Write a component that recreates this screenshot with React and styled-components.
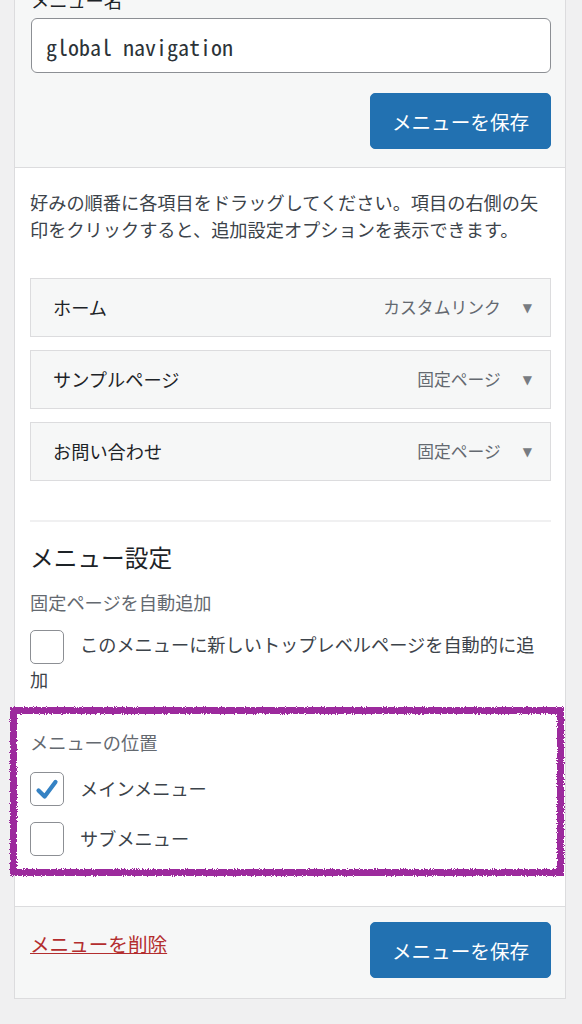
import React from 'react';
import styled, { createGlobalStyle } from 'styled-components';

const GlobalStyle = createGlobalStyle`
  html, body {
    margin: 0;
    padding: 0;
    background: #f0f0f1;
  }
  body {
    font-family: "Noto Sans CJK JP", "Noto Sans", sans-serif;
    font-size: 18.2px;
    line-height: 1.5;
    color: #3c434a;
  }
`;

const items = [
  { title: 'ホーム', type: 'カスタムリンク' },
  { title: 'サンプルページ', type: '固定ページ' },
  { title: 'お問い合わせ', type: '固定ページ' },
];

const App = () => {
  return (
    <Page>
      <GlobalStyle />
      <RoughFilter width="0" height="0">
        <filter id="rough">
          <feTurbulence type="fractalNoise" baseFrequency="0.9" numOctaves="2" seed="3" />
          <feDisplacementMap in="SourceGraphic" scale="4" />
        </filter>
      </RoughFilter>
      <Panel>
        <Header>
          <Label>メニュー名</Label>
          <NameInput defaultValue="global navigation" />
          <ButtonRow>
            <PrimaryButton>メニューを保存</PrimaryButton>
          </ButtonRow>
        </Header>

        <Body>
          <Intro>
            好みの順番に各項目をドラッグしてください。項目の右側の矢印をクリックすると、追加設定オプションを表示できます。
          </Intro>

          <ItemList>
            {items.map((item) => (
              <Item key={item.title}>
                <ItemTitle>{item.title}</ItemTitle>
                <ItemControls>
                  <ItemType>{item.type}</ItemType>
                  <Arrow>▼</Arrow>
                </ItemControls>
              </Item>
            ))}
          </ItemList>

          <Divider />

          <SettingsTitle>メニュー設定</SettingsTitle>
          <GroupName>固定ページを自動追加</GroupName>
          <CheckLabel>
            <Box />
            このメニューに新しいトップレベルページを自動的に追加
          </CheckLabel>

          <Group>
            <Highlight />
            <GroupName>メニューの位置</GroupName>
            <CheckRow>
              <Box>
                <svg width="34" height="34" viewBox="0 0 34 34">
                  <path
                    d="M8 17.5 L14.5 24 L26 8.5"
                    fill="none"
                    stroke="#3582c4"
                    strokeWidth="4.5"
                    strokeLinecap="round"
                    strokeLinejoin="round"
                  />
                </svg>
              </Box>
              メインメニュー
            </CheckRow>
            <CheckRow>
              <Box />
              サブメニュー
            </CheckRow>
          </Group>
        </Body>

        <Footer>
          <DeleteLink href="#">メニューを削除</DeleteLink>
          <PrimaryButton>メニューを保存</PrimaryButton>
        </Footer>
      </Panel>
    </Page>
  );
};

export default App;

const Page = styled.div`
  padding: 0 16px 40px 14px;
  margin-top: -30px;
`;

const RoughFilter = styled.svg`
  position: absolute;
  width: 0;
  height: 0;
`;

const Panel = styled.div`
  border: 1px solid #dcdcde;
  border-top: none;
  background: #fff;
`;

const Header = styled.div`
  background: #f6f7f7;
  padding: 16px 14px 18px 16px;
  border-bottom: 1px solid #dcdcde;
`;

const Label = styled.div`
  color: #1d2327;
  line-height: 29px;
  margin-bottom: 3px;
`;

const NameInput = styled.input`
  display: block;
  box-sizing: border-box;
  width: 100%;
  height: 55px;
  border: 1px solid #8c8f94;
  border-radius: 6px;
  background: #fff;
  padding: 0 14px;
  font-family: "Noto Sans Mono CJK JP", "DejaVu Sans Mono", monospace;
  font-size: 22px;
  color: #2c3338;
  outline: none;
`;

const ButtonRow = styled.div`
  display: flex;
  justify-content: flex-end;
  margin-top: 20px;
`;

const PrimaryButton = styled.button`
  width: 181px;
  height: 56px;
  border: 1px solid #2271b1;
  border-radius: 5px;
  background: #2271b1;
  color: #fff;
  font-family: inherit;
  font-size: 19.6px;
  padding: 0;
  cursor: pointer;
`;

const Body = styled.div`
  padding: 21px 14px 50px 15px;
`;

const Intro = styled.p`
  margin: 0;
  line-height: 27px;
  color: #3c434a;
`;

const ItemList = styled.div`
  display: flex;
  flex-direction: column;
  gap: 13px;
  margin-top: 35px;
`;

const Item = styled.div`
  display: flex;
  align-items: center;
  justify-content: space-between;
  height: 59px;
  box-sizing: border-box;
  padding: 0 18px 0 22px;
  background: #f6f7f7;
  border: 1px solid #dcdcde;
`;

const ItemTitle = styled.span`
  color: #1d2327;
`;

const ItemControls = styled.div`
  display: flex;
  align-items: center;
  gap: 22px;
`;

const ItemType = styled.span`
  font-size: 16.8px;
  color: #646970;
`;

const Arrow = styled.span`
  font-family: "DejaVu Sans", sans-serif;
  font-size: 12px;
  color: #787c82;
`;

const Divider = styled.hr`
  border: none;
  border-top: 2px solid #f0f0f1;
  margin: 39px 0 0;
`;

const SettingsTitle = styled.h3`
  margin: 19px 0 0;
  font-size: 23.7px;
  font-weight: 400;
  line-height: 32px;
  color: #1d2327;
`;

const GroupName = styled.div`
  line-height: 27px;
  color: #646970;
  margin-top: 16px;
`;

const Box = styled.span`
  display: inline-flex;
  box-sizing: border-box;
  width: 34px;
  height: 34px;
  border: 1px solid #8c8f94;
  border-radius: 5px;
  background: #fff;
  vertical-align: middle;
  margin-right: 16px;
  flex-shrink: 0;
  overflow: hidden;
`;

const CheckLabel = styled.label`
  display: block;
  margin-top: 13px;
  line-height: 31px;
  color: #3c434a;
`;

const Group = styled.div`
  position: relative;
  margin-top: 34px;

  & > ${GroupName} {
    margin-top: 0;
  }
`;

const Highlight = styled.div`
  position: absolute;
  top: -22px;
  left: -20px;
  right: -13px;
  bottom: -20px;
  border: 7px solid #9c2a9d;
  filter: url(#rough);
  pointer-events: none;
`;

const CheckRow = styled.label`
  display: flex;
  align-items: center;
  margin-top: 16px;
  color: #3c434a;

  & + & {
    margin-top: 16px;
  }
`;

const Footer = styled.div`
  display: flex;
  justify-content: space-between;
  align-items: flex-start;
  background: #f6f7f7;
  border-top: 1px solid #dcdcde;
  padding: 15px 14px 20px 15px;
`;

const DeleteLink = styled.a`
  margin-top: 7px;
  line-height: 29px;
  color: #b32d2e;
  text-decoration: underline;
  font-size: 19.6px;
`;
